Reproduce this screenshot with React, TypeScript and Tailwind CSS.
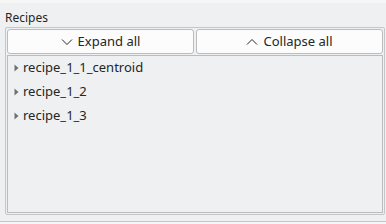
import React from 'react';

const recipes = ['recipe_1_1_centroid', 'recipe_1_2', 'recipe_1_3'];

const Chevron = ({ up }: { up?: boolean }) => (
  <svg width="12" height="8" viewBox="0 0 12 8" className="mr-[5px]">
    <path
      d={up ? 'M1 6.5 L6 1.5 L11 6.5' : 'M1 1.5 L6 6.5 L11 1.5'}
      fill="none"
      stroke="#232627"
      strokeWidth="1"
    />
  </svg>
);

const Arrow = () => (
  <svg width="5" height="8" viewBox="0 0 5 8" className="mr-[4px]">
    <path d="M0.5 0.5 L4.5 4 L0.5 7.5 Z" fill="#6e7073" />
  </svg>
);

export default function App() {
  return (
    <div
      className="w-[386px] h-[224px] bg-[#eff0f1] text-[#232627] flex flex-col overflow-hidden"
      style={{ fontFamily: '"Noto Sans", "Liberation Sans", sans-serif' }}
    >
      <div className="h-[3px] bg-[#f6f6f7]" />
      <div className="px-[5px] pt-[6px] h-[24px] text-[12px] leading-[17px]">Recipes</div>
      <div className="ml-[5px] mr-[1px] h-[188px] border border-[#c4c6c8] rounded-[2px] p-[1px] flex flex-col">
        <div className="flex gap-[2px] h-[25px]">
          <button className="flex-1 flex items-center justify-center bg-[#fcfcfc] border border-[#babcbe] rounded-[3px] text-[13px]">
            <Chevron />
            Expand all
          </button>
          <button className="flex-1 flex items-center justify-center bg-[#fcfcfc] border border-[#babcbe] rounded-[3px] text-[13px]">
            <Chevron up />
            Collapse all
          </button>
        </div>
        <div className="mt-[1px] flex-1 border border-[#babcbe] bg-[#eff0f1]">
          {recipes.map((r) => (
            <div key={r} className="h-[24px] flex items-center pl-[6px] text-[13px]">
              <Arrow />
              {r}
            </div>
          ))}
        </div>
      </div>
      <div className="mt-[6px] h-[1px] bg-[#c4c6c8]" />
      <div className="flex-1 bg-[#f6f6f7]" />
    </div>
  );
}
